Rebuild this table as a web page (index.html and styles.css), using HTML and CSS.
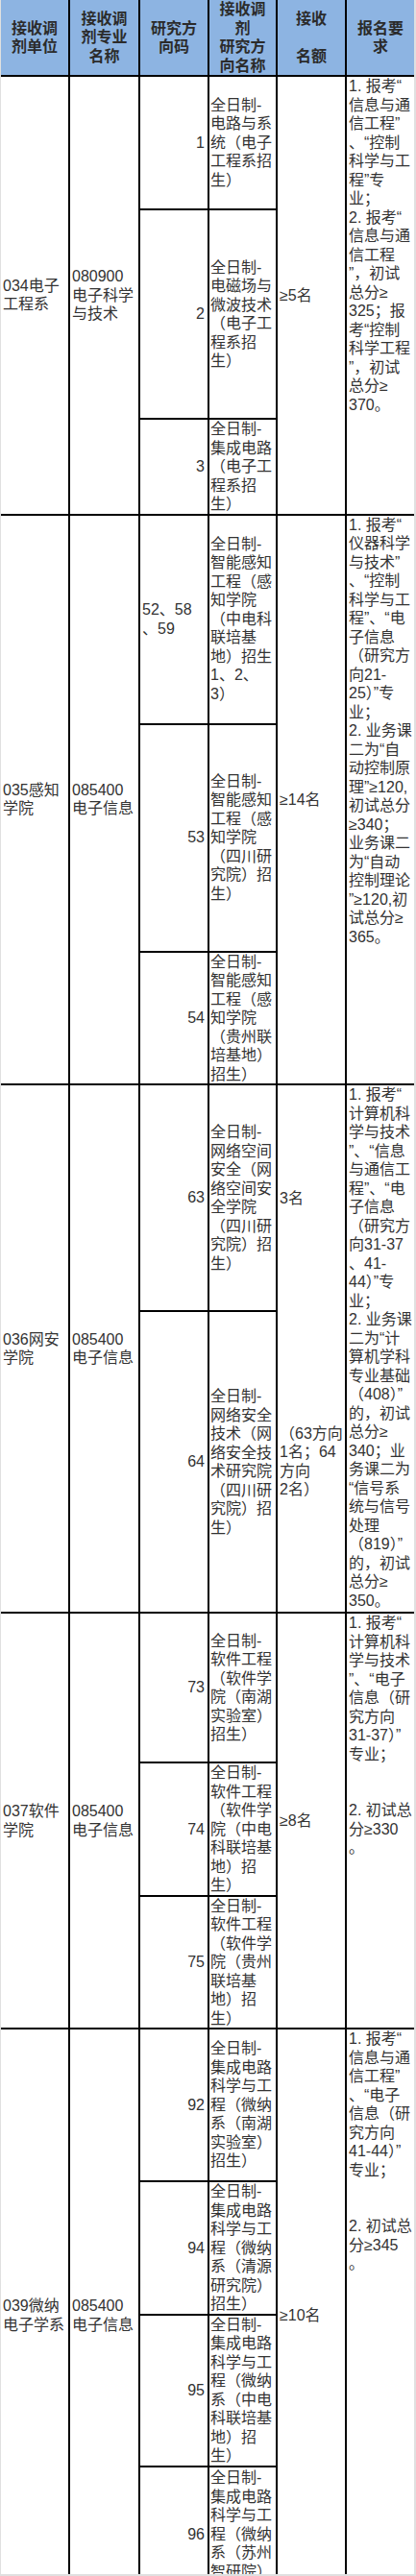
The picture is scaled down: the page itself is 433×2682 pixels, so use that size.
FILE: index.html
```html
<!DOCTYPE html>
<html lang="zh-CN">
<head>
<meta charset="utf-8">
<title>接收调剂专业</title>
<link rel="stylesheet" href="styles.css">
</head>
<body>
<div class="frame">
<table class="grid">
<colgroup>
<col class="c1"><col class="c2"><col class="c3"><col class="c4"><col class="c5"><col class="c6">
</colgroup>
<thead>
<tr class="head">
<th>接收调<br>剂单位</th>
<th>接收调<br>剂专业<br>名称</th>
<th>研究方<br>向码</th>
<th>接收调<br>剂<br>研究方<br>向名称</th>
<th>接收<br><br>名额</th>
<th>报名要<br>求</th>
</tr>
</thead>
<tbody>
<tr class="h139">
<td rowspan="3">034电子<br>工程系</td>
<td rowspan="3">080900<br>电子科学<br>与技术</td>
<td class="code">1</td>
<td class="dir">全日制-<br>电路与系<br>统（电子<br>工程系招<br>生）</td>
<td rowspan="3">≥5名</td>
<td rowspan="3" class="req">1. 报考“<br>信息与通<br>信工程”<br>、“控制<br>科学与工<br>程”专<br>业；<br>2. 报考“<br>信息与通<br>信工程<br>”，初试<br>总分≥<br>325；报<br>考“控制<br>科学工程<br>”，初试<br>总分≥<br>370。</td>
</tr>
<tr class="h218">
<td class="code">2</td>
<td class="dir">全日制-<br>电磁场与<br>微波技术<br>（电子工<br>程系招<br>生）</td>
</tr>
<tr class="h96">
<td class="code">3</td>
<td class="dir">全日制-<br>集成电路<br>（电子工<br>程系招<br>生）</td>
</tr>

<tr class="h218">
<td rowspan="3">035感知<br>学院</td>
<td rowspan="3">085400<br>电子信息</td>
<td>52、58<br>、59</td>
<td class="dir">全日制-<br>智能感知<br>工程（感<br>知学院<br>（中电科<br>联培基<br>地）招生<br>1、2、<br>3）</td>
<td rowspan="3">≥14名</td>
<td rowspan="3" class="req">1. 报考“<br>仪器科学<br>与技术”<br>、“控制<br>科学与工<br>程”、“电<br>子信息<br>（研究方<br>向21-<br>25）”专<br>业；<br>2. 业务课<br>二为“自<br>动控制原<br>理”≥120,<br>初试总分<br>≥340；<br>业务课二<br>为“自动<br>控制理论<br>”≥120,初<br>试总分≥<br>365。</td>
</tr>
<tr class="h237">
<td class="code">53</td>
<td class="dir">全日制-<br>智能感知<br>工程（感<br>知学院<br>（四川研<br>究院）招<br>生）</td>
</tr>
<tr class="h135">
<td class="code">54</td>
<td class="dir">全日制-<br>智能感知<br>工程（感<br>知学院<br>（贵州联<br>培基地）<br>招生）</td>
</tr>

<tr class="h236">
<td rowspan="2">036网安<br>学院</td>
<td rowspan="2">085400<br>电子信息</td>
<td class="code">63</td>
<td class="dir">全日制-<br>网络空间<br>安全（网<br>络空间安<br>全学院<br>（四川研<br>究院）招<br>生）</td>
<td class="open-below">3名</td>
<td rowspan="2" class="req">1. 报考“<br>计算机科<br>学与技术<br>”、“信息<br>与通信工<br>程”、“电<br>子信息<br>（研究方<br>向31-37<br>、41-<br>44）”专<br>业；<br>2. 业务课<br>二为“计<br>算机学科<br>专业基础<br>（408）”<br>的，初试<br>总分≥<br>340；业<br>务课二为<br>“信号系<br>统与信号<br>处理<br>（819）”<br>的，初试<br>总分≥<br>350。</td>
</tr>
<tr class="h314">
<td class="code">64</td>
<td class="dir">全日制-<br>网络安全<br>技术（网<br>络安全技<br>术研究院<br>（四川研<br>究院）招<br>生）</td>
<td>（63方向<br>1名；64<br>方向<br>2名）</td>
</tr>

<tr class="h156">
<td rowspan="3">037软件<br>学院</td>
<td rowspan="3">085400<br>电子信息</td>
<td class="code">73</td>
<td class="dir">全日制-<br>软件工程<br>（软件学<br>院（南湖<br>实验室）<br>招生）</td>
<td rowspan="3">≥8名</td>
<td rowspan="3" class="req">1. 报考“<br>计算机科<br>学与技术<br>”、“电子<br>信息（研<br>究方向<br>31-37）”<br>专业；<br><br><br>2. 初试总<br>分≥330<br>。</td>
</tr>
<tr class="h136">
<td class="code">74</td>
<td class="dir">全日制-<br>软件工程<br>（软件学<br>院（中电<br>科联培基<br>地）招<br>生）</td>
</tr>
<tr class="h134">
<td class="code">75</td>
<td class="dir">全日制-<br>软件工程<br>（软件学<br>院（贵州<br>联培基<br>地）招<br>生）</td>
</tr>

<tr class="h159">
<td rowspan="4">039微纳<br>电子学系</td>
<td rowspan="4">085400<br>电子信息</td>
<td class="code">92</td>
<td class="dir">全日制-<br>集成电路<br>科学与工<br>程（微纳<br>系（南湖<br>实验室）<br>招生）</td>
<td rowspan="4">≥10名</td>
<td rowspan="4" class="req">1. 报考“<br>信息与通<br>信工程”<br>、“电子<br>信息（研<br>究方向<br>41-44）”<br>专业；<br><br><br>2. 初试总<br>分≥345<br>。</td>
</tr>
<tr class="h135">
<td class="code">94</td>
<td class="dir">全日制-<br>集成电路<br>科学与工<br>程（微纳<br>系（清源<br>研究院）<br>招生）</td>
</tr>
<tr class="h153">
<td class="code">95</td>
<td class="dir">全日制-<br>集成电路<br>科学与工<br>程（微纳<br>系（中电<br>科联培基<br>地）招<br>生）</td>
</tr>
<tr class="h141">
<td class="code">96</td>
<td class="dir">全日制-<br>集成电路<br>科学与工<br>程（微纳<br>系（苏州<br>智研院）<br>招生）</td>
</tr>
</tbody>
</table>
</div>
</body>
</html>
```

FILE: styles.css
```css
html, body {
  margin: 0;
  padding: 0;
  background: #e0e0e0;
}

.frame {
  margin: 0 2px 0 1px;
  height: 2680px;
  overflow: hidden;
  background: #ffffff;
}

.grid {
  width: 430px;
  table-layout: fixed;
  border-collapse: collapse;
  border-style: hidden;
  font-family: "Liberation Sans", "Noto Sans CJK SC", sans-serif;
  font-size: 16px;
  line-height: 19.5px;
  color: #333333;
}

.c1 { width: 71px; }
.c2 { width: 73px; }
.c3 { width: 72px; }
.c4 { width: 71px; }
.c5 { width: 72px; }
.c6 { width: 71px; }

.grid th,
.grid td {
  border: 2px solid #000000;
  padding: 0 2px;
  white-space: nowrap;
  vertical-align: middle;
  text-align: left;
}

.grid th {
  background: #8db4e2;
  font-weight: bold;
  text-align: center;
  color: #2b2b2b;
}

.head { height: 79px; }

.grid td.code { text-align: right; padding-right: 3px; }
.grid td.dir { padding: 0 1px; }
.grid td.req { vertical-align: top; }
.grid td.open-below { border-bottom-style: hidden; }

.h96 { height: 96px; }
.h134 { height: 134px; }
.h135 { height: 135px; }
.h136 { height: 136px; }
.h139 { height: 139px; }
.h141 { height: 141px; }
.h153 { height: 153px; }
.h156 { height: 156px; }
.h159 { height: 159px; }
.h218 { height: 218px; }
.h236 { height: 236px; }
.h237 { height: 237px; }
.h314 { height: 314px; }
```
